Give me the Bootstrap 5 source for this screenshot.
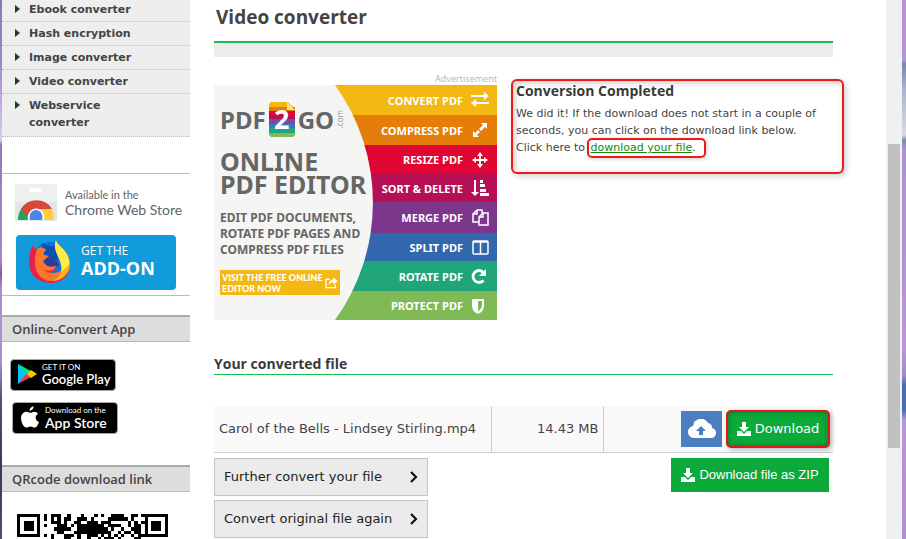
<!DOCTYPE html>
<html lang="en">
<head>
<meta charset="utf-8">
<meta name="viewport" content="width=device-width, initial-scale=1">
<title>Video converter</title>
<link href="https://cdn.jsdelivr.net/npm/bootstrap@5.3.0/dist/css/bootstrap.min.css" rel="stylesheet">
<style>
body{font-family:"DejaVu Sans",Verdana,sans-serif;font-size:12px;line-height:17px;color:#444}
.edge-l{width:2px;background:linear-gradient(#8c78b8 0,#9c86c6 60px,#c3a6e4 100px,#d9cdea 140px,#9478b4 145px,#a488cc 260px,#8a5c9c 274px,#a98fd0 290px,#a98fd0 360px,#5f4a78 400px,#453354 470px,#5a4a78)}
.edge-r{width:4px;background:linear-gradient(#b595d8 0,#b595d8 60px,#7587ac 64px,#a9b6cc 90px,#dcd8e4 135px,#7f8bac 140px,#b090d4 150px,#b895dc 350px,#a58acb 375px,#4a6cb0 385px,#4a6cb0 410px,#b895dc 420px,#b090d4)}
.rail{width:16px;background:#eff0f1;padding:144px 2px 0}
.thumb{height:304px;background:#c1c1c1}
.side{width:188px}
.side-nav a{display:flex;color:#444;font-size:11px;font-weight:700;background:#eee;border-bottom:1px dotted #bbb;padding:3px 50px 3px 13px;text-decoration:none}
.side-nav a:first-child{padding-top:1px}
.side-nav a:last-child{padding-bottom:5px}
.side-nav a::before{content:"";flex:none;border:4px solid transparent;border-left:5px solid #333;border-right:0;margin:4px 9px 0 0;height:0}
.side-title{font:600 13px/22px "Open Sans",sans-serif;background:#ddd;border-top:2px solid #aaa;border-bottom:1px solid #bbb;padding:1px 10px;margin:19px 0 0}
.stores{padding:17px 8px 0;gap:11px}
.stores+.side-title{margin-top:31px}
.addons{margin-top:36px;border-top:1px solid #bbb;border-bottom:1px solid #bbb;height:123px;padding:10px 8px 0 13px}
.addons a,.shop{text-decoration:none}
.addons svg,.shop svg{flex:none}
.cws{color:#5f6368;font-family:Lato,sans-serif;gap:8px}
.cws small{font-size:11px;line-height:14px;display:block}
.cws b{font-size:14px;line-height:16px;font-weight:400;display:block;white-space:nowrap}
.fx{margin:14px 0 0 1px;width:160px;height:55px;border-radius:4px;background:#129bdb;color:#fff;font-family:"Open Sans",sans-serif;padding:0 0 4px 9px;gap:8px}
.fx small{font-size:12px;line-height:14px;display:block}
.fx b{font-size:18px;line-height:20px;display:block}
.shop{background:#000;border:1px solid #a6a6a6;border-radius:4px;height:32px;width:106px;color:#fff;font-family:Lato,sans-serif;padding:0 6px 2px;gap:5px}
.shop:hover{color:#fff}
.shop-alt{margin-left:2px;padding-left:8px;gap:6px}
.shop small{font-size:8px;line-height:10px;display:block;white-space:nowrap}
.shop b{font-size:13px;line-height:15px;font-weight:600;display:block;white-space:nowrap}
.shop-alt b{font-size:14px}
.qr{margin:22px 0 0 15px}
.page-main{margin:0 53px 0 24px;min-width:0}
.h-main{font:700 19px/24px "Open Sans",sans-serif;margin:5px 0 0;padding:0 2px 12px;border-bottom:2px solid #1eb955}
.h-sub{font:700 14px/20px "Open Sans",sans-serif;margin:0;color:#3a3a3a}
.greybar{height:14px;background:#ececec;margin-bottom:16px}
.ad-label{font:9px/12px "Noto Sans",sans-serif;color:#bbb}
.ad{width:283px;height:235px;font-family:"Noto Sans","Open Sans",sans-serif;color:#666;text-decoration:none}
.ad-rows{display:grid;grid-template-rows:30px 30px 29px 28px 31px 28px 30px 29px;color:#fff;font:700 11px/17px "Noto Sans",sans-serif}
.ad-rows div{display:flex;align-items:center;justify-content:flex-end;gap:7px;padding:0 7px 0 0}
.ad-rows svg{width:20px;height:20px}
.c1{background:#f3b813}.c2{background:#e57d0b}.c3{background:#df0632}.c4{background:#b60f56}.c5{background:#7c368c}.c6{background:#3267ad}.c7{background:#20a47a}.c8{background:#7fba57}
.ad-disc{inset:0}
.ad-copy{inset:0;padding:17px 0 0 6px;font-weight:700}
.ad-logo{font-size:24px;line-height:35px;height:35px}
.ad-logo svg{margin:0 3px}
.ad-com{writing-mode:vertical-rl;transform:rotate(180deg);font-size:8px;line-height:12px;font-weight:400;color:#999}
.ad-big{font-size:25px;line-height:23px;margin-top:13px}
.ad-mid{font-size:12px;line-height:16px;margin-top:14px}
.ad-cta{font:900 9px/11px Lato,sans-serif;background:#f3b813;color:#fff;width:120px;height:25px;margin-top:12px;padding:0 2px}
.done-col{margin-top:12px}
.done{margin:-6px -11px 0 14px;height:95px;border:2px solid #f01818;border-radius:6px;padding:0 3px;box-shadow:2px 2px 6px #0003,inset 2px 2px 6px #0003}
.done p{font-size:11px;margin:4px 0 0}
.done a{color:#128a12}
.ring{border:2px solid #f01818;border-radius:5px;padding:1px 8px 2px 2px;margin-left:-2px;box-shadow:1px 1px 4px #0003}
.h-file{margin-top:34px;border-bottom:1px solid #14c04c}
.files{margin:31px 0 5px;background:#f9f9f9;font-size:13px}
.files td{height:46px;border-bottom:1px solid #ccc;vertical-align:middle;padding:0 4px 0 5px}
.files td+td{border-left:1px solid #ccc}
.files .col-size{width:112px}.files .col-act{width:230px;padding-right:3px}
.btn-flat{border:0;border-radius:0;color:#fff;background:#0ca93b;font-size:13px;line-height:20px}
.btn-flat:hover{background:#0b9c36;color:#fff}
.btn-cloud,.btn-cloud:hover{background:#4a7ebf;width:41px;height:36px}
.btn-dl{width:104px;height:38px;border:2px solid #e01818;border-radius:5px;box-shadow:2px 2px 5px #0004,inset 0 0 6px #0004}
.btn-zip{font:13px/20px "Liberation Sans",sans-serif;width:158px;height:34px;margin-right:4px}
.more{gap:4px}
.btn-grey{width:214px;height:38px;border:1px solid #c4c4c4;border-radius:0;background:#ebebeb;color:#222;font-size:13px;padding:0 9px}
</style>
</head>
<body>
<div class="d-flex vh-100 overflow-hidden">
<div class="edge-l flex-shrink-0"></div>
<aside class="side flex-shrink-0">
<nav class="side-nav">
<a href="#">Ebook converter</a><a href="#">Hash encryption</a><a href="#">Image converter</a><a href="#">Video converter</a><a href="#">Webservice converter</a>
</nav>
<div class="addons">
<a href="#" class="cws d-flex align-items-center">
<svg width="42" height="37" viewBox="0 0 42 37"><path fill="#e4e6e5" d="M0 0h42v37H0z"/><path fill="#eef0f0" d="M0 18h42V0H0z"/><rect x="14" y="4" width="13" height="4" rx="2" fill="#fff"/><path fill="#1fa55c" d="M3 36q0-7 4-12l8 12z"/><path fill="#da483b" d="M6 25a18 18 0 0 1 31 0H22l-9 8z"/><path fill="#fdd03b" d="M22 25h15q2 5 2 11H26z"/><path fill="#fff" d="M13 36a8.200 9.500 0 1 1 16 0z"/><path fill="#4a86ee" d="M15 36a6.400 7.500 0 1 1 12 0z"/></svg>
<span><small>Available in the</small><b>Chrome Web Store</b></span></a>
<a href="#" class="fx d-flex align-items-center">
<svg width="48" height="47" viewBox="0 0 48 47"><circle cx="25" cy="22" r="17" fill="#1472d6"/><path fill="#0a4fb4" d="M17 6q8 5 14 2l2 16-14-4z"/><path fill="#2a3f9b" d="M16 20c9-1 14 2 18 8l-9 6-12-5z"/><path fill="#e8204c" d="M8 8c1 3 3 4 5 5 3-2 6-2 8 0-2 2-3 3-2 5l5 1-6 5c2 5 7 7 13 5 2 5-10 11-14 6 6 9 25 6 27-11 3 12-4 21-17 22C12 46 4 37 4 25c0-6 1-12 4-17z"/><path fill="#ff762b" d="M12 12c4-3 7-1 9 1-2 2-3 3-2 5l5 1-6 5c2 5 7 7 13 5-1 5-9 6-13 3 6 7 20 5 24-6 3 8-6 19-17 18C11 43 7 27 12 12z"/><path fill="#ffb01e" d="M32 8c6 4 13 11 13 19 0 10-9 17-17 17 9-5 10-12 9-21-1-5-2-9-5-15z"/><path fill="#ffec46" d="M31 3c0 5 14 10 13 24-2 4-6 6-8 8 3-12-10-20-5-32z"/></svg>
<span><small>GET THE</small><b>ADD-ON</b></span></a>
</div>
<h2 class="side-title">Online-Convert App</h2>
<div class="stores d-flex flex-column">
<a href="#" class="shop d-flex align-items-center"><svg width="20" height="22" viewBox="0 0 20 22"><path fill="#00c3ff" d="M1 1v20l11-10z"/><path fill="#00e27b" d="M1 1l13 7-4 4z"/><path fill="#f23645" d="M1 21l13-7-4-4z"/><path fill="#ffc400" d="M14 7l6 4-6 4-4-4z"/></svg><span><small>GET IT ON</small><b>Google Play</b></span></a>
<a href="#" class="shop shop-alt d-flex align-items-center"><svg width="18" height="22" viewBox="0 0 17 20"><path fill="#fff" d="M12 0c0 2-2 4-4 4 0-2 2-4 4-4zM9 6c1 0 2-1 4-1 1 0 3 1 3 2-3 2-3 6 1 8-1 2-2 5-4 5-2 0-2-1-4-1s-2 1-4 1C2 20 0 14 0 11c0-4 3-6 5-6 2 0 3 1 4 1z"/></svg><span><small>Download on the</small><b>App Store</b></span></a>
</div>
<h2 class="side-title">QRcode download link</h2>
<svg class="qr d-block" width="151" height="151" viewBox="0 0 45 45" shape-rendering="crispEdges"><path fill="none" stroke="#000" d="M.5.5h6v6h-6zM38.500.5h6v6h-6zM.5 38.500h6v6h-6z"/><path d="M2 2h3v3H2zM40 2h3v3h-3zM2 40h3v3H2z"/><path stroke="#000" d="M8 .5h1m1 0h3m2 0h1m3 0h1m3 0h1m1 0h1m2 0h4m2 0h2m1 0h1M8 1.500h1m1 0h1m1 0h1m1 0h2m2 0h3m1 0h1m4 0h6m1 0h1M10 2.500h3m1 0h1m2 0h2m2 0h3m1 0h3m5 0h1m1 0h1m1 0h1M8 3.500h1m3 0h3m1 0h1m1 0h8m1 0h4m2 0h1m1 0h2M11 4.500h5m2 0h9m1 0h1m2 0h1m2 0h3M12 5.500h2m3 0h11m2 0h1m1 0h2m1 0h2M8 6.500h1m1 0h1m3 0h3m1 0h1m2 0h3m1 0h1m1 0h1m1 0h1m1 0h1m2 0h1m1 0h2M10 7.500h1m3 0h2m2 0h1m2 0h1m2 0h1m1 0h3m1 0h1m4 0h2"/></svg>
</aside>
<main class="page-main flex-grow-1">
<h1 class="h-main">Video converter</h1>
<div class="greybar"></div>
<div class="d-flex align-items-start">
<div class="flex-shrink-0">
<div class="ad-label text-end">Advertisement</div>
<a href="#" class="ad position-relative d-block">
<div class="ad-rows">
<div class="c1">CONVERT PDF<svg viewBox="0 0 20 20" fill="#fff"><path d="M1 5h13V2l5 4-5 4V7H1zM19 12H6V9l-5 4 5 4v-3h13z"/></svg></div>
<div class="c2">COMPRESS PDF<svg viewBox="0 0 20 20" fill="#fff"><path d="M11 3h6v6l-2-2-4 4-2-2 4-4zM3 11l2 2 3-3 2 2-3 3 2 2H3z"/></svg></div>
<div class="c3">RESIZE PDF<svg viewBox="0 0 20 20" fill="#fff"><path d="M10 2l3 4h-2v3h3V7l4 3-4 3v-2h-3v3h2l-3 4-3-4h2v-3H6v2l-4-3 4-3v2h3V6H7z"/></svg></div>
<div class="c4">SORT &amp; DELETE<svg viewBox="0 0 20 20" fill="#fff"><path d="M4 2h2v12h3l-4 4-4-4h3zM10 2h3v3h-3zM10 6h5v3h-5zM10 11h6v3h-6zM10 15h9v3h-9z"/></svg></div>
<div class="c5">MERGE PDF<svg viewBox="0 0 20 20" fill="none" stroke="#fff" stroke-width="1.500"><path d="M12 5V2H7L3 6v8h6M7 2v4H3M13 5h5v12H9V9zM13 5v4H9"/></svg></div>
<div class="c6">SPLIT PDF<svg viewBox="0 0 20 20" fill="none" stroke="#fff" stroke-width="1.500"><rect x="3" y="4" width="15" height="13" rx="1"/><path d="M10.500 4v13M3 5h15"/></svg></div>
<div class="c7">ROTATE PDF<svg viewBox="0 0 20 20" fill="none" stroke="#fff" stroke-width="2.800"><path d="M13.500 14.500a6 6 0 1 1 0-8"/><path fill="#fff" stroke="none" d="M16 3v7H9z"/></svg></div>
<div class="c8">PROTECT PDF<svg viewBox="0 0 20 20"><path fill="#fff" fill-rule="evenodd" d="M2 3h12v7q0 5-6 8-6-3-6-8zM8 5v10q4-2 4-6V5z"/></svg></div>
</div>
<svg class="ad-disc position-absolute" width="283" height="235"><path fill="#f5f5f4" d="M0 0H121A201 201 0 0 1 121 235H0z"/></svg>
<div class="ad-copy position-absolute">
<div class="ad-logo d-flex align-items-center">PDF<svg class="overflow-visible" width="26" height="35" viewBox="0 0 26 35"><path fill="#f3b813" d="M2 0h17l7 7v5H0V2z"/><path fill="#e57d0b" d="M0 5h26v4H0z"/><path fill="#df0632" d="M0 9h26v4H0z"/><path fill="#b60f56" d="M0 13h26v4H0z"/><path fill="#7c4c9c" d="M0 17h26v5H0z"/><path fill="#3c78c0" d="M0 22h26v4H0z"/><path fill="#20a48a" d="M0 26h26v5H0z"/><path fill="#7fba57" d="M0 31h26v2l-2 2H2l-2-2z"/><path fill="#f9df88" d="M18 0l8 8h-8z"/><text x="5" y="27" fill="#fff" font-size="27" font-weight="700">2</text></svg>GO<span class="ad-com">.com</span></div>
<div class="ad-big">ONLINE<br>PDF EDITOR</div>
<div class="ad-mid">EDIT PDF DOCUMENTS,<br>ROTATE PDF PAGES AND<br>COMPRESS PDF FILES</div>
<div class="ad-cta d-flex align-items-center justify-content-between"><span class="text-nowrap">VISIT THE FREE ONLINE<br>EDITOR NOW</span><svg width="13" height="12" viewBox="0 0 14 12"><path fill="none" stroke="#fff" stroke-width="1.500" d="M5 2H1v9h10V8"/><path fill="#fff" d="M9 0l5 4-5 4V5q-3 0-5 3 0-5 5-6z"/></svg></div>
</div>
</a>
</div>
<section class="done-col flex-grow-1">
<div class="done">
<h2 class="h-sub">Conversion Completed</h2>
<p>We did it! If the download does not start in a couple of<br>seconds, you can click on the download link below.<br>Click here to <span class="ring"><a href="#">download your file</a>.</span></p>
</div>
</section>
</div>
<h2 class="h-sub h-file">Your converted file</h2>
<table class="files w-100"><tbody><tr><td>Carol of the Bells - Lindsey Stirling.mp4</td><td class="col-size text-end">14.43 MB</td><td class="col-act"><div class="d-flex justify-content-end align-items-center gap-1">
<button type="button" class="btn btn-flat btn-cloud p-0" aria-label="Save to cloud"><svg width="28" height="20" viewBox="0 0 28 20"><path fill="#fff" d="M7 19a6 6 0 0 1-2-12 8 8 0 0 1 15-3 5 5 0 0 1 4 5 5 5 0 0 1-2 10z"/><path fill="#4a7ebf" d="M13 7l5 5h-3v4h-4v-4H8z"/></svg></button>
<button type="button" class="btn btn-flat btn-dl d-flex align-items-center justify-content-center gap-1 p-0 text-nowrap"><svg width="14" height="14" viewBox="0 0 14 14"><path fill="#fff" d="M5 0h4v5h3L7 10 2 5h3zM0 9h4l3 3 3-3h4v5H0z"/></svg>Download</button></div></td></tr></tbody></table>
<div class="d-flex justify-content-between align-items-start">
<div class="more d-flex flex-column">
<button type="button" class="btn btn-grey d-flex justify-content-between align-items-center">Further convert your file<svg width="8" height="12" viewBox="0 0 8 12"><path fill="none" stroke="#111" stroke-width="2.200" d="M1 1l5 5-5 5"/></svg></button>
<button type="button" class="btn btn-grey d-flex justify-content-between align-items-center">Convert original file again<svg width="8" height="12" viewBox="0 0 8 12"><path fill="none" stroke="#111" stroke-width="2.200" d="M1 1l5 5-5 5"/></svg></button>
</div>
<button type="button" class="btn btn-flat btn-zip d-flex align-items-center justify-content-center gap-1 p-0 text-nowrap"><svg width="14" height="14" viewBox="0 0 14 14"><path fill="#fff" d="M5 0h4v5h3L7 10 2 5h3zM0 9h4l3 3 3-3h4v5H0z"/></svg>Download file as ZIP</button>
</div>
</main>
<div class="rail flex-shrink-0"><div class="thumb"></div></div>
<div class="edge-r flex-shrink-0"></div>
</div>
<script src="https://cdn.jsdelivr.net/npm/bootstrap@5.3.0/dist/js/bootstrap.bundle.min.js"></script>
</body>
</html>
